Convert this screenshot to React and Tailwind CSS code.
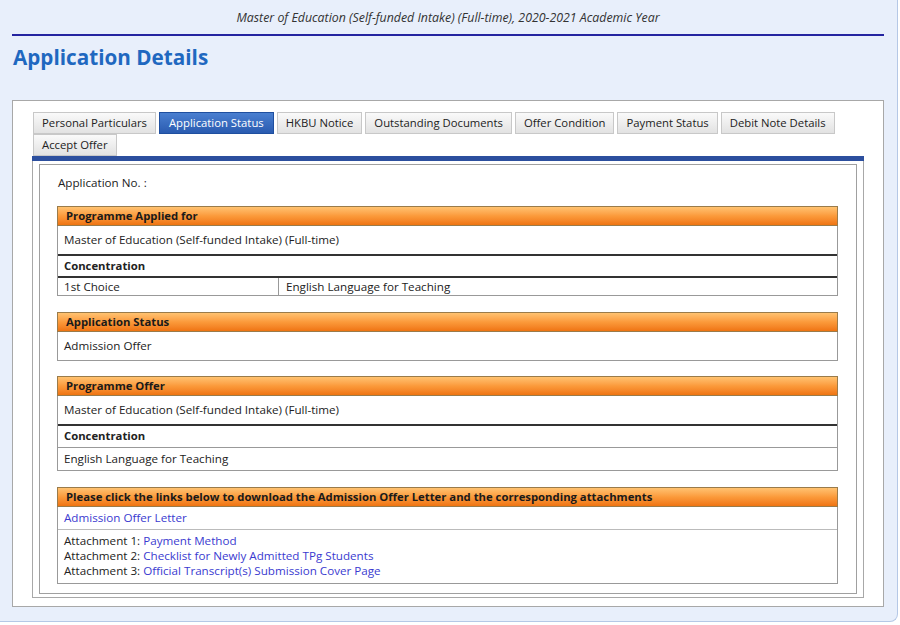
const row1 = [
  "Personal Particulars",
  "Application Status",
  "HKBU Notice",
  "Outstanding Documents",
  "Offer Condition",
  "Payment Status",
  "Debit Note Details",
];

const Tab = ({ label, active }) => (
  <div
    className={
      active
        ? "h-[22px] px-[9px] flex items-center border border-[#1f4f9f] bg-gradient-to-b from-[#4a7fd0] to-[#2a5bb0] text-white"
        : "h-[22px] px-[8px] flex items-center border border-[#c8c8c8] bg-gradient-to-b from-[#fafafa] to-[#e2e2e2] text-[#222]"
    }
  >
    {label}
  </div>
);

const Header = ({ children }) => (
  <div className="h-[20px] flex items-center px-[8px] border border-[#9a7b4a] bg-gradient-to-b from-[#ffc270] via-[#fb9a3a] to-[#ef7410] font-bold text-[11.3px] text-[#1a1a1a]">
    {children}
  </div>
);

const Link = ({ children }) => <span className="text-[#3a3ad0]">{children}</span>;

export default function App() {
  return (
    <div className="w-[900px] h-[625px] bg-white overflow-hidden" style={{ fontFamily: '"Open Sans", "Noto Sans", sans-serif' }}>
      <div className="w-[898px] h-[622px] bg-[#e8effb] border-r border-b border-[#b5c8e6] rounded-br-[8px] pl-[12px] pr-[13px]">
        <div className="h-[34px] flex items-center justify-center italic text-[12.35px] text-[#333] pt-[2px]">
          Master of Education (Self-funded Intake) (Full-time), 2020-2021 Academic Year
        </div>
        <div className="h-[2px] bg-[#2424a0]" />
        <h1 className="mt-[7px] ml-[1px] text-[20.7px] leading-[28px] font-bold text-[#1f68c0]">Application Details</h1>
        <div className="mt-[29px] h-[507px] bg-white border border-[#a8a8a8] px-[19px] pt-[11px] text-[11.65px] text-[#222]">
          <div className="pl-[1px]">
            <div className="flex gap-x-[3px] text-[11.3px]">
              {row1.map((t) => (
                <Tab key={t} label={t} active={t === "Application Status"} />
              ))}
            </div>
            <div className="flex text-[11.3px]">
              <Tab label="Accept Offer" />
            </div>
          </div>
          <div className="h-[5px] bg-[#2c4f9e]" />
          <div className="border border-t-0 border-[#a8a8a8] px-[6px] pt-[3px] pb-[3px]">
            <div className="border border-[#a0a0a0] pl-[17px] pr-[18px] pt-[9px] pb-[9px]">
              <div className="h-[18px] flex items-center ml-[1px]">Application No. :</div>
              <div className="mt-[14px]">
                <Header>Programme Applied for</Header>
                <div className="border-x border-[#999]">
                  <div className="h-[30px] flex items-center px-[6px] border-b-2 border-[#333]">
                    Master of Education (Self-funded Intake) (Full-time)
                  </div>
                  <div className="h-[22px] flex items-center px-[6px] font-bold text-[11.3px] border-b-2 border-[#333]">Concentration</div>
                  <div className="h-[18px] flex border-b border-[#999]">
                    <div className="w-[221px] px-[6px] flex items-center border-r border-[#999]">1st Choice</div>
                    <div className="px-[7px] flex items-center">English Language for Teaching</div>
                  </div>
                </div>
              </div>
              <div className="mt-[16px]">
                <Header>Application Status</Header>
                <div className="h-[29px] flex items-center px-[6px] border-x border-b border-[#999]">Admission Offer</div>
              </div>
              <div className="mt-[15px]">
                <Header>Programme Offer</Header>
                <div className="border-x border-[#999]">
                  <div className="h-[30px] flex items-center px-[6px] border-b-2 border-[#333]">
                    Master of Education (Self-funded Intake) (Full-time)
                  </div>
                  <div className="h-[22px] flex items-center px-[6px] font-bold text-[11.3px] border-b border-[#999]">Concentration</div>
                  <div className="h-[23px] flex items-center px-[6px] border-b border-[#999]">English Language for Teaching</div>
                </div>
              </div>
              <div className="mt-[16px]">
                <Header>Please click the links below to download the Admission Offer Letter and the corresponding attachments</Header>
                <div className="border-x border-b border-[#999]">
                  <div className="h-[23px] flex items-center px-[6px] border-b border-[#bbb]">
                    <Link>Admission Offer Letter</Link>
                  </div>
                  <div className="px-[6px] pt-[3px] pb-[5px] leading-[15px]">
                    <div>Attachment 1: <Link>Payment Method</Link></div>
                    <div>Attachment 2: <Link>Checklist for Newly Admitted TPg Students</Link></div>
                    <div>Attachment 3: <Link>Official Transcript(s) Submission Cover Page</Link></div>
                  </div>
                </div>
              </div>
            </div>
          </div>
        </div>
      </div>
    </div>
  );
}
